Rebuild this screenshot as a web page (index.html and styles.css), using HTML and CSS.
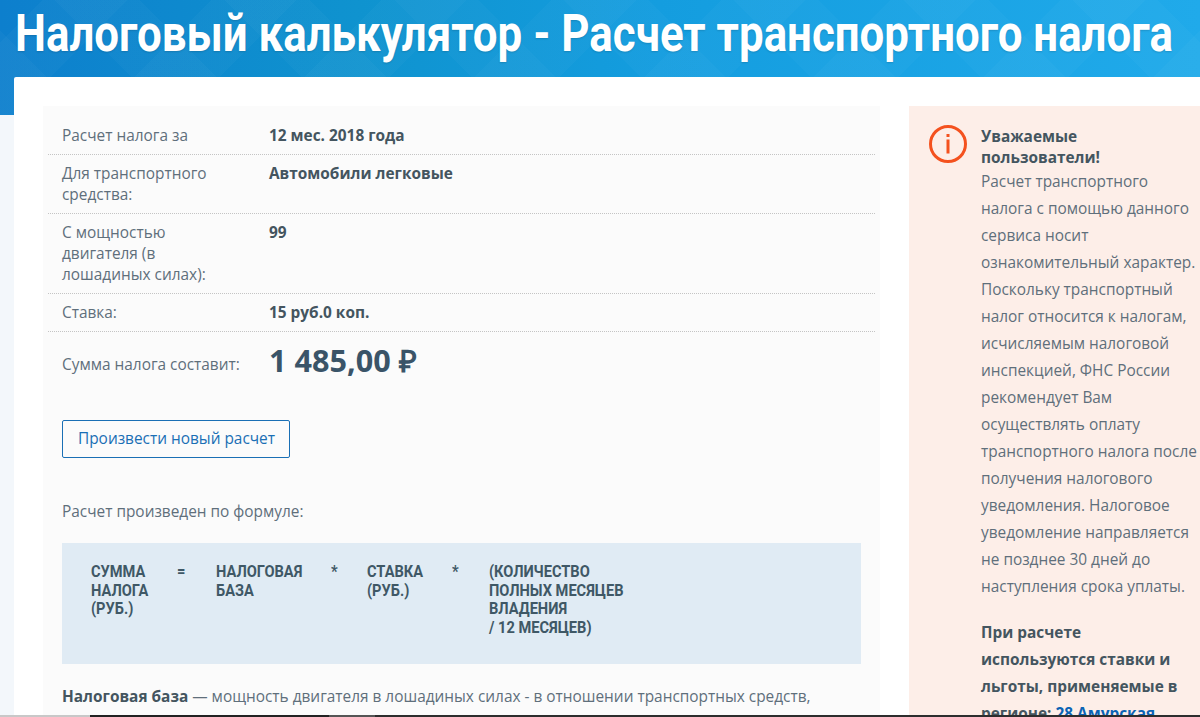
FILE: index.html
```html
<!DOCTYPE html>
<html>
<head>
    <title>Налоговый калькулятор - Расчет транспортного налога</title>
    <link rel="stylesheet" href="styles.css">
</head>
<body>
    <header class="page-head">
        <h1><span>Налоговый калькулятор - Расчет транспортного налога</span></h1>
    </header>

    <div class="card">
        <main class="calc">
            <div class="row">
                <div class="row-label">Расчет налога за</div>
                <div class="row-value">12 мес. 2018 года</div>
            </div>
            <div class="row">
                <div class="row-label">Для транспортного средства:</div>
                <div class="row-value">Автомобили легковые</div>
            </div>
            <div class="row">
                <div class="row-label">С мощностью двигателя (в лошадиных силах):</div>
                <div class="row-value">99</div>
            </div>
            <div class="row">
                <div class="row-label">Ставка:</div>
                <div class="row-value">15 руб.0 коп.</div>
            </div>
            <div class="total">
                <div class="total-label">Сумма налога составит:</div>
                <div class="total-value">1 485,00 ₽</div>
            </div>

            <a class="btn" href="#">Произвести новый расчет</a>

            <p class="formula-title">Расчет произведен по формуле:</p>

            <div class="formula">
                <div class="cell cell-sum"><span>СУММА<br>НАЛОГА<br>(РУБ.)</span></div>
                <div class="cell cell-eq"><span>=</span></div>
                <div class="cell cell-base"><span>НАЛОГОВАЯ<br>БАЗА</span></div>
                <div class="cell cell-mul"><span>*</span></div>
                <div class="cell cell-rate"><span>СТАВКА<br>(РУБ.)</span></div>
                <div class="cell cell-mul2"><span>*</span></div>
                <div class="cell"><span>(КОЛИЧЕСТВО<br>ПОЛНЫХ МЕСЯЦЕВ<br>ВЛАДЕНИЯ<br>/ 12 МЕСЯЦЕВ)</span></div>
            </div>

            <p class="note"><strong>Налоговая база</strong> — мощность двигателя в лошадиных силах - в отношении транспортных средств,</p>
        </main>

        <aside class="notice">
            <svg class="notice-icon" width="38" height="38" viewBox="0 0 38 38">
                <circle cx="19" cy="19" r="17.5" fill="none" stroke="#f4511e" stroke-width="3"/>
                <rect x="17.5" y="9" width="3" height="3" fill="#f4511e"/>
                <rect x="17.5" y="14.5" width="3" height="14" fill="#f4511e"/>
            </svg>
            <div class="notice-body">
                <div class="notice-title">Уважаемые пользователи!</div>
                <p>Расчет транспортного налога с помощью данного сервиса носит ознакомительный характер. Поскольку транспортный налог относится к налогам, исчисляемым налоговой инспекцией, ФНС России рекомендует Вам осуществлять оплату транспортного налога после получения налогового уведомления. Налоговое уведомление направляется не позднее 30 дней до наступления срока уплаты.</p>
                <p class="notice-region">При расчете используются ставки и льготы, применяемые в регионе: <a href="#">28 Амурская область</a></p>
            </div>
        </aside>
    </div>

    <div class="taskbar"></div>
</body>
</html>
```

FILE: styles.css
```css
html, body { height: 717px; overflow: hidden; }
body { margin: 0; background: #f3f7fb; font-family: "Open Sans", Arial, sans-serif; font-size: 15.4px; line-height: 21px; color: #5f6f7b; }

.page-head {
    height: 115px;
    overflow: hidden;
    background-color: #0f8fd2;
    background-image:
        repeating-linear-gradient(45deg, rgba(255,255,255,.025) 0 60px, transparent 60px 120px),
        repeating-linear-gradient(-45deg, rgba(255,255,255,.025) 0 60px, transparent 60px 120px),
        linear-gradient(90deg, #0d7fcd, #0f93cf 30%, #149ddf 55%, #20aaea);
}
.page-head h1 { margin: 0; padding: 4px 0 0 15px; font-family: Roboto, Arial, sans-serif; font-size: 52px; line-height: 60px; font-weight: 700; color: #fff; white-space: nowrap; text-shadow: 0 1px 2px rgba(0,0,0,.15); }
.page-head h1 span { display: inline-block; transform: scaleX(.843); transform-origin: left center; }

.card { display: flex; align-items: flex-start; gap: 29px; margin: -38px 0 0 14px; padding: 29px 0 0 29px; height: 611px; overflow: hidden; background: #fff; border-radius: 2px 0 0 0; }

.calc { flex: 0 0 837px; box-sizing: border-box; padding: 11px 5px 0 5px; height: 640px; background: #fbfbfb; }
.row { display: flex; padding: 8px 0; border-bottom: 1px dotted #c4c4c4; }
.row-label { flex: 0 0 221px; box-sizing: border-box; padding: 0 50px 0 14px; }
.row-value { font-weight: 700; color: #44555f; }

.total { display: flex; align-items: center; padding: 7px 0 0 14px; }
.total-label { flex: 0 0 207px; padding-top: 8px; }
.total-value { font-size: 30.6px; line-height: 42px; font-weight: 700; color: #3a5468; }

.btn { display: inline-block; margin: 39px 0 0 14px; padding: 7px 14px 8px 15px; border: 1px solid #1a6fb5; border-radius: 2px; color: #1a6fb5; text-decoration: none; }

.formula-title { margin: 43px 0 0 14px; }

.formula { display: flex; box-sizing: border-box; width: 799px; height: 121px; margin: 21px 0 0 14px; padding: 19px 0 0 29px; background: #e0ebf4; font-family: Roboto, Arial, sans-serif; font-size: 17px; line-height: 18.5px; font-weight: 700; color: #3f5866; white-space: nowrap; }
.cell span { display: inline-block; transform: scaleX(.86); transform-origin: left top; }
.cell-sum { flex: 0 0 86px; }
.cell-eq { flex: 0 0 39px; }
.cell-base { flex: 0 0 115px; }
.cell-mul { flex: 0 0 36px; }
.cell-rate { flex: 0 0 85px; }
.cell-mul2 { flex: 0 0 37px; }

.note { margin: 22px 0 0 14px; white-space: nowrap; }
.note strong { color: #44555f; }

.notice { flex: 0 0 291px; display: flex; gap: 14px; box-sizing: border-box; padding: 19px 0 0 20px; height: 640px; background: #fdeee8; line-height: 27px; }
.notice-icon { flex: none; }
.notice-body { flex: none; width: 217px; padding-top: 1px; }
.notice-title { font-weight: 700; line-height: 21px; color: #44555f; }
.notice-body p { margin: 0; }
.notice-body .notice-region { margin-top: 19px; font-weight: 700; color: #44555f; }
.notice-region a { color: #0b63b5; text-decoration: none; }

/* strip of the window below the page */
.taskbar { position: fixed; left: 0; right: 0; bottom: 0; height: 2px; background: linear-gradient(90deg, #c8c8c8 0 90px, #222 90px 329px, #555 329px 375px, #2d2d2d 375px); }
```
